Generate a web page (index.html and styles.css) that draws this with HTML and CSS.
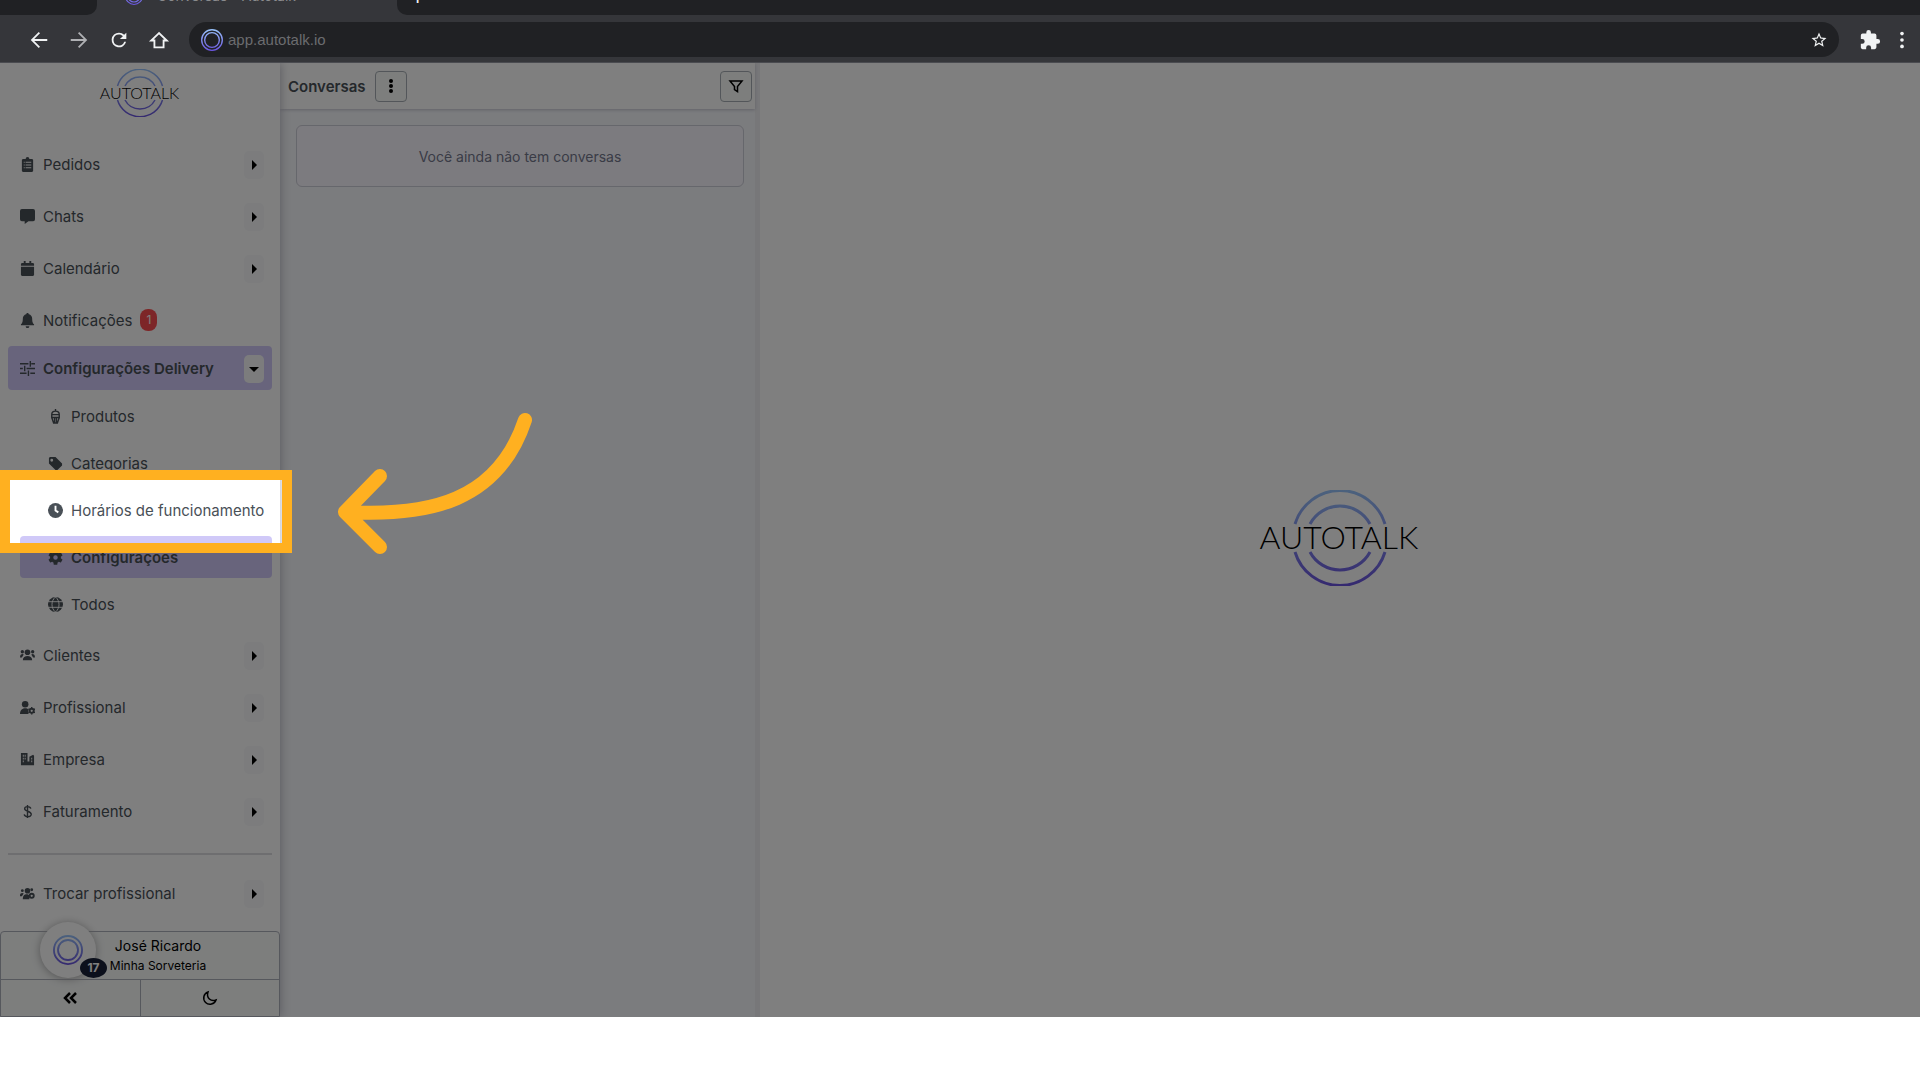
FILE: index.html
```html
<!DOCTYPE html>
<html lang="pt-BR">
<head>
  <meta charset="UTF-8">
  <title>Conversas - Autotalk</title>
  <meta name="viewport" content="width=device-width, initial-scale=1">
  <link rel="stylesheet" href="styles.css">
</head>
<body>
  <svg class="defs" aria-hidden="true">
    <defs>
      <linearGradient id="ring" gradientUnits="userSpaceOnUse" x1="0" y1="0" x2="0" y2="96">
        <stop offset="0" stop-color="#98c4fb"/>
        <stop offset="1" stop-color="#6a53e0"/>
      </linearGradient>
      <symbol id="logo" viewBox="0 0 164 96">
        <g fill="none" stroke="url(#ring)" stroke-width="3">
          <path d="M37 34A47 47 0 0 1 127 34M52 34A34 34 0 0 1 112 34"/>
          <path d="M37 62A47 47 0 0 0 127 62M52 62A34 34 0 0 0 112 62"/>
        </g>
        <text class="logo-text" x="81" y="59" text-anchor="middle">AUTOTALK</text>
      </symbol>
      <symbol id="rings" viewBox="0 0 96 96">
        <g fill="none" stroke="url(#ring)" stroke-width="6">
          <circle cx="48" cy="48" r="45"/>
          <circle cx="48" cy="48" r="32"/>
        </g>
      </symbol>
    </defs>
  </svg>

  <header class="browser">
    <div class="tabs">
      <div class="tab-prev"></div>
      <div class="tab">
        <svg width="18" height="18"><use href="#rings"/></svg>
        <span>Conversas - Autotalk</span>
      </div>
      <div class="tab-rest">+</div>
    </div>
    <div class="toolbar">
      <button class="tool" aria-label="Voltar"><svg viewBox="0 0 24 24"><path d="M21 11H6.8l6.3-6.3L11.700 3.300 3 12l8.700 8.700 1.400-1.400L6.800 13H21z"/></svg></button>
      <button class="tool muted" aria-label="Avançar"><svg viewBox="0 0 24 24"><path d="M3 11h14.200l-6.300-6.300 1.400-1.400L21 12l-8.700 8.700-1.400-1.400 6.300-6.300H3z"/></svg></button>
      <button class="tool" aria-label="Recarregar"><svg viewBox="0 0 24 24"><path d="M17.650 6.350A7.960 7.960 0 0 0 12 4a8 8 0 1 0 7.730 10h-2.080A6 6 0 1 1 12 6c1.660 0 3.140.69 4.220 1.780L13 11h7V4z"/></svg></button>
      <button class="tool" aria-label="Início"><svg viewBox="0 0 24 24"><path d="M12 4.500L3.500 12.500H7V20h10v-7.500h3.500z" fill="none" stroke="currentColor" stroke-width="2"/></svg></button>
      <div class="address">
        <svg width="22" height="22"><use href="#rings"/></svg>
        <input class="url" type="text" value="app.autotalk.io" aria-label="Endereço">
        <button class="star" aria-label="Favoritar"><svg viewBox="0 0 24 24"><path d="M22 9.240l-7.190-.62L12 2 9.190 8.630 2 9.240l5.460 4.730L5.820 21 12 17.270 18.180 21l-1.630-7.030zM12 15.400l-3.760 2.270 1-4.280-3.320-2.880 4.380-.38L12 6.100l1.710 4.040 4.380.38-3.320 2.880 1 4.280z"/></svg></button>
      </div>
      <button class="tool ext" aria-label="Extensões"><svg viewBox="0 0 24 24"><path d="M20.500 11H19V7a2 2 0 0 0-2-2h-4V3.500a2.500 2.500 0 0 0-5 0V5H4a2 2 0 0 0-2 2v3.800h1.500a2.700 2.700 0 0 1 0 5.400H2V20c0 1.100.9 2 2 2h3.800v-1.500a2.700 2.700 0 0 1 5.400 0V22H17a2 2 0 0 0 2-2v-4h1.500a2.500 2.500 0 0 0 0-5z"/></svg></button>
      <button class="tool more" aria-label="Menu"><svg viewBox="0 0 24 24"><circle cx="12" cy="5" r="2"/><circle cx="12" cy="12" r="2"/><circle cx="12" cy="19" r="2"/></svg></button>
    </div>
  </header>

  <main class="app">
    <aside class="sidebar">
      <svg class="brand" role="img" aria-label="Autotalk"><use href="#logo"/></svg>
      <nav>
        <ul class="menu">
          <li class="item">
            <svg viewBox="0 0 16 16"><path fill-rule="evenodd" d="M3 2h3a2 2 0 0 1 4 0h3l1 1v12l-1 1H3l-1-1V3zM4 5v1h1V5zm2 0v1h6V5zM4 8v1h1V8zm2 0v1h6V8zm-2 3v1h1v-1zm2 0v1h6v-1z"/></svg>
            <a href="#">Pedidos</a><button class="toggle" aria-label="Abrir Pedidos"></button>
          </li>
          <li class="item">
            <svg viewBox="0 0 16 16"><path d="M2 0h12a2 2 0 0 1 2 2v9a2 2 0 0 1-2 2H9l-4 3v-3H2a2 2 0 0 1-2-2V2a2 2 0 0 1 2-2z"/></svg>
            <a href="#">Chats</a><button class="toggle" aria-label="Abrir Chats"></button>
          </li>
          <li class="item">
            <svg viewBox="0 0 16 16"><path d="M1 5V3l1-1h2V0h2v2h4V0h2v2h2l1 1v2zM1 6h14v9l-1 1H2l-1-1z"/></svg>
            <a href="#">Calendário</a><button class="toggle" aria-label="Abrir Calendário"></button>
          </li>
          <li class="item tight">
            <svg viewBox="0 0 16 16"><path d="M7 0h2v1c3 1 4 3 4 5 0 4 1 5 2 6v1H1v-1c1-1 2-2 2-6 0-2 1-4 4-5zM6 14h4a2 2 0 0 1-4 0z"/></svg>
            <a href="#">Notificações</a><span class="badge">1</span>
          </li>
          <li class="item active">
            <svg viewBox="0 0 16 16"><path d="M0 3h9M12 3h4M11 0v6M0 8h3M7 8h9M5 5v6M0 13h7M11 13h5M9 10v6" fill="none" stroke="currentColor" stroke-width="1.500"/></svg>
            <a href="#">Configurações Delivery</a><button class="toggle open" aria-label="Fechar Configurações Delivery"></button>
          </li>
        </ul>
        <ul class="submenu">
          <li class="item">
            <svg viewBox="0 0 16 16"><path d="M4 6c0-5 8-5 8 0v3H4zM8 0v3M4 9l2 6h4l2-6M4 6h8M7 9v5M9 9v5" fill="none" stroke="currentColor" stroke-width="1.500"/></svg>
            <a href="#">Produtos</a>
          </li>
          <li class="item">
            <svg viewBox="0 0 16 16"><path fill-rule="evenodd" d="M1 2l1-1h6l7 7v2l-5 5H8L1 8zM4 3a1 1 0 0 0 0 3 1 1 0 0 0 0-3z"/></svg>
            <a href="#">Categorias</a>
          </li>
          <li class="item">
            <svg viewBox="0 0 16 16"><circle cx="8" cy="8" r="8"/><path d="M8 3v5l3 2" fill="none" stroke="#fff" stroke-width="2"/></svg>
            <a href="#">Horários de funcionamento</a>
          </li>
          <li class="item active">
            <svg viewBox="2 2 20 20"><path d="M19.140 12.940c.04-.3.060-.61.060-.94s-.02-.64-.07-.94l2.030-1.580a.5.5 0 0 0 .12-.61l-1.920-3.320a.5.5 0 0 0-.59-.22l-2.390.96a7 7 0 0 0-1.620-.94l-.36-2.540a.5.5 0 0 0-.48-.41h-3.840a.5.5 0 0 0-.47.41l-.36 2.540a7 7 0 0 0-1.620.94l-2.390-.96a.5.5 0 0 0-.59.22L2.740 8.870a.5.5 0 0 0 .12.61l2.030 1.580a6 6 0 0 0 0 1.880l-2.030 1.580a.5.5 0 0 0-.12.61l1.920 3.320c.12.22.37.290.59.220l2.390-.96c.5.38 1.030.7 1.620.94l.36 2.540c.05.24.24.41.48.41h3.840c.24 0 .44-.17.47-.41l.36-2.540a7 7 0 0 0 1.620-.94l2.390.96c.22.08.47 0 .59-.22l1.920-3.320a.5.5 0 0 0-.12-.61zM12 15a3 3 0 1 1 0-6 3 3 0 0 1 0 6z"/></svg>
            <a href="#">Configurações</a>
          </li>
          <li class="item">
            <svg viewBox="0 0 16 16"><circle cx="8" cy="8" r="8"/><path d="M0 5h16M0 11h16M8 0C3 4 3 12 8 16M8 0c5 4 5 12 0 16" fill="none" stroke="#fff"/></svg>
            <a href="#">Todos</a>
          </li>
        </ul>
        <ul class="menu">
          <li class="item">
            <svg viewBox="0 0 16 16"><circle cx="8" cy="4.500" r="3"/><circle cx="2.500" cy="4" r="1.800"/><circle cx="13.500" cy="4" r="1.800"/><path d="M3 13c0-6 10-6 10 0zM0 10c0-4 3-4 4-3l-2 3H0zM16 10c0-4-3-4-4-3l2 3h2z"/></svg>
            <a href="#">Clientes</a><button class="toggle" aria-label="Abrir Clientes"></button>
          </li>
          <li class="item">
            <svg viewBox="0 0 16 16"><circle cx="5.500" cy="4.500" r="3.500"/><path d="M0 15c0-7 7-7 9-5v5z"/><circle cx="12.500" cy="11.500" r="2.200" fill="none" stroke="currentColor" stroke-width="2"/><path d="M12.500 7.500v1.500M12.500 14v1.500M9 9.500l1.300.8M14.700 12.800l1.300.8M9 13.600l1.300-.8M14.700 10.300l1.300-.8" stroke="currentColor" stroke-width="1.500"/></svg>
            <a href="#">Profissional</a><button class="toggle" aria-label="Abrir Profissional"></button>
          </li>
          <li class="item">
            <svg viewBox="0 0 16 16"><path fill-rule="evenodd" d="M1 1h7v9h2V5l4-2 1 1v10H1zM3 3v2h1V3zm2 0v2h1V3zM3 6v2h1V6zm2 0v2h1V6zM3 9v2h1V9zm9-3v2h1V6zm0 3v2h1V9z"/></svg>
            <a href="#">Empresa</a><button class="toggle" aria-label="Abrir Empresa"></button>
          </li>
          <li class="item">
            <svg viewBox="0 0 16 16"><path d="M11.500 5C11 2 5 2 5 5s7 2.500 7 6-7 3-7.500 0M8 1v14" fill="none" stroke="currentColor" stroke-width="1.500"/></svg>
            <a href="#">Faturamento</a><button class="toggle" aria-label="Abrir Faturamento"></button>
          </li>
        </ul>
        <hr>
        <ul class="menu">
          <li class="item">
            <svg viewBox="0 0 16 16"><circle cx="8" cy="5" r="3"/><circle cx="2.500" cy="5" r="1.500"/><circle cx="12.500" cy="4" r="1.500"/><path d="M3 14c0-6 5-6 7-4v4zM0 10c0-3 3-3 4-2l-2 3H0z"/><circle cx="12.500" cy="10.500" r="2.200" fill="none" stroke="currentColor" stroke-width="2"/></svg>
            <a href="#">Trocar profissional</a><button class="toggle" aria-label="Abrir Trocar profissional"></button>
          </li>
        </ul>
      </nav>
      <footer class="account">
        <div class="profile">
          <span class="person">José Ricardo</span>
          <span class="company">Minha Sorveteria</span>
        </div>
        <div class="actions">
          <button aria-label="Recolher menu"><svg viewBox="0 0 16 16"><path d="M8 3L3 8l5 5M14 3L9 8l5 5" fill="none" stroke="currentColor" stroke-width="2.500"/></svg></button>
          <button aria-label="Modo escuro"><svg viewBox="0 0 16 16"><path d="M6 2a6.300 6.300 0 1 0 8 8C9 12 4 8 6 2z" fill="none" stroke="currentColor" stroke-width="1.500"/></svg></button>
        </div>
        <button class="widget" aria-label="Abrir chat">
          <svg width="30" height="30"><use href="#rings"/></svg>
          <span class="count">17</span>
        </button>
      </footer>
    </aside>

    <section class="panel">
      <div class="panel-head">
        <h1>Conversas</h1>
        <button class="square" aria-label="Mais opções"><svg viewBox="0 0 16 16"><circle cx="8" cy="3" r="2"/><circle cx="8" cy="8" r="2"/><circle cx="8" cy="13" r="2"/></svg></button>
        <button class="square filter" aria-label="Filtrar"><svg viewBox="0 0 16 16"><path d="M2 3h12L9.500 8.500v5l-3-2v-3z" fill="none" stroke="currentColor" stroke-width="1.500"/></svg></button>
      </div>
      <p class="empty">Você ainda não tem conversas</p>
    </section>

    <section class="stage">
      <svg class="stage-logo" role="img" aria-label="Autotalk"><use href="#logo"/></svg>
    </section>

    <!-- tutorial step: everything outside the box is dimmed -->
    <div class="spotlight"></div>
    <svg class="arrow" viewBox="0 0 200 150"><path d="M12 102C97 107 165 91 192 10M47 66L12 102l35 35"/></svg>
  </main>
</body>
</html>
```
FILE: styles.css
```css
* {
  box-sizing: border-box;
}
body {
  display: flex;
  flex-direction: column;
  height: 100vh;
  margin: 0;
  padding-bottom: 63px;
  background: #fff;
  color: #495057;
  font-family: Inter, "Liberation Sans", sans-serif;
  font-size: 15px;
}
button {
  display: flex;
  align-items: center;
  justify-content: center;
  padding: 0;
  border: none;
  background: none;
  color: inherit;
  font: inherit;
  cursor: pointer;
}
svg {
  flex: none;
  fill: currentColor;
}
ul {
  margin: 0;
  padding: 0;
  list-style: none;
}
.defs {
  position: absolute;
  width: 0;
  height: 0;
}
.logo-text {
  fill: #000;
  font-family: Lato, sans-serif;
  font-size: 32px;
  font-weight: 300;
}

/* browser bar */
.browser {
  flex: none;
  background: #35363a;
  border-bottom: 1px solid #4a4b50;
  color: #f1f3f4;
}
.tabs {
  display: flex;
  height: 15px;
  overflow: hidden;
}
.tab-prev {
  width: 97px;
  background: #202124;
  border-bottom-right-radius: 10px;
}
.tab {
  display: flex;
  align-items: flex-end;
  gap: 14px;
  width: 300px;
  padding: 0 28px 10px;
  color: #8a8b8e;
  font-size: 14px;
  line-height: 18px;
  white-space: nowrap;
}
.tab-rest {
  display: flex;
  flex: 1;
  align-items: flex-end;
  padding: 0 14px 8px;
  background: #202124;
  border-bottom-left-radius: 10px;
  font-size: 20px;
  line-height: 20px;
}
.toolbar {
  display: flex;
  align-items: center;
  gap: 16px;
  height: 47px;
  padding: 2px 6px 0 27px;
}
.tool,
.tool svg {
  width: 24px;
  height: 24px;
}
.tool svg {
  padding: 1px;
}
.muted {
  color: #b0b1b4;
}
.more {
  margin-left: -8px;
}
.address {
  display: flex;
  flex: 1;
  align-items: center;
  height: 35px;
  margin: 0 3px 0 2px;
  padding: 0 11px 0 12px;
  border-radius: 18px;
  background: #202124;
}
.url {
  flex: 1;
  padding: 0 5px;
  border: none;
  outline: none;
  background: none;
  color: #6b6c6f;
  font: 15px "Liberation Sans", sans-serif;
}
.star svg {
  width: 18px;
  height: 18px;
}

/* app */
.app {
  position: relative;
  display: flex;
  flex: 1;
  min-height: 0;
  overflow: hidden;
  background: #fff;
}
.sidebar {
  position: relative;
  z-index: 1;
  display: flex;
  flex-direction: column;
  flex: none;
  width: 280px;
  background: #fff;
  box-shadow: 0 0 10px #b0b0bc;
}
.brand {
  width: 82px;
  height: 48px;
  margin: 6px auto 25px;
}
nav {
  flex: 1;
  padding: 0 8px;
}
.menu {
  display: flex;
  flex-direction: column;
  gap: 8px;
}
.item {
  display: flex;
  align-items: center;
  height: 44px;
  padding: 0 8px 0 12px;
  border-radius: 4px;
}
.item svg {
  width: 15px;
  height: 15px;
}
.item a {
  margin-left: 8px;
  color: inherit;
  text-decoration: none;
  white-space: nowrap;
}
.tight {
  margin-bottom: -4px;
}
.active {
  background: #d0c9f8;
  font-weight: 600;
}
.submenu {
  display: flex;
  flex-direction: column;
  gap: 5px;
  margin: 5px 0 8px 12px;
}
.submenu .item {
  height: 42px;
  padding-left: 28px;
}
.toggle {
  width: 20px;
  height: 28px;
  margin: 2px 0 0 auto;
  border-radius: 5px;
  background: #f8f9fa;
}
.toggle::before {
  content: "";
  border: 5px solid transparent;
  border-left-color: #000;
  border-right: none;
}
.toggle.open::before {
  border: 5px solid transparent;
  border-top-color: #000;
  border-bottom: none;
}
.badge {
  width: 17px;
  margin-left: 8px;
  border-radius: 8px;
  background: #fa4d50;
  color: #fff;
  font-size: 12px;
  line-height: 22px;
  text-align: center;
}
hr {
  height: 2px;
  margin: 20px 0 16px;
  border: none;
  background: #dcdce0;
}

.account {
  position: relative;
  border: 1px solid #adb0ba;
  border-radius: 4px 4px 0 0;
  background: #fafcfb;
  color: #000;
}
.profile {
  display: flex;
  flex-direction: column;
  align-items: center;
  height: 47px;
  padding: 4px 0 0 36px;
  line-height: 20px;
}
.person {
  font-size: 14px;
}
.company {
  font-size: 12px;
}
.actions {
  display: flex;
  border-top: 1px solid #adb0ba;
}
.actions button {
  flex: 1;
  height: 36px;
}
.actions button + button {
  border-left: 1px solid #adb0ba;
}
.actions svg {
  width: 16px;
  height: 16px;
}
.widget {
  position: absolute;
  top: -10px;
  left: 39px;
  width: 56px;
  height: 56px;
  border-radius: 50%;
  background: #fff;
  box-shadow: 0 1px 8px #aaa;
}
.count {
  position: absolute;
  right: -11px;
  bottom: 0;
  width: 27px;
  border-radius: 50%;
  background: #182038;
  color: #fff;
  font-size: 12px;
  font-weight: 700;
  line-height: 20px;
}

.panel {
  flex: none;
  width: 480px;
  border-right: 5px solid #eeeef2;
  background: #f6f8fc;
}
.panel-head {
  display: flex;
  align-items: center;
  height: 46px;
  padding: 0 3px 0 8px;
  background: #fff;
  box-shadow: 0 1px 3px #c4c4d0;
}
h1 {
  margin: 0 9px 0 0;
  font-size: 15px;
  font-weight: 600;
}
.square {
  width: 32px;
  height: 31px;
  border: 1px solid #a6adb4;
  border-radius: 4px;
  background: #fafcfb;
  color: #000;
}
.square svg {
  width: 16px;
  height: 16px;
}
.filter {
  margin-left: auto;
}
.empty {
  margin: 16px 11px 0 16px;
  padding-top: 2px;
  border: 1px solid #cdced8;
  border-radius: 6px;
  background: #f8f6fe;
  color: #74788d;
  font-size: 14px;
  line-height: 58px;
  text-align: center;
}
.stage {
  display: flex;
  flex: 1;
  align-items: center;
  justify-content: center;
  padding-bottom: 4px;
}
.stage-logo {
  width: 164px;
  height: 96px;
}

/* tutorial overlay */
.spotlight {
  position: absolute;
  z-index: 2;
  top: 407px;
  left: 0;
  width: 292px;
  height: 83px;
  border: 10px solid #ffb020;
  box-shadow: 0 0 0 3000px rgba(0, 0, 0, 0.5);
}
.arrow {
  position: absolute;
  z-index: 3;
  top: 347px;
  left: 333px;
  width: 200px;
  height: 150px;
  fill: none;
  stroke: #ffb020;
  stroke-width: 14;
  stroke-linecap: round;
  stroke-linejoin: round;
}
```
